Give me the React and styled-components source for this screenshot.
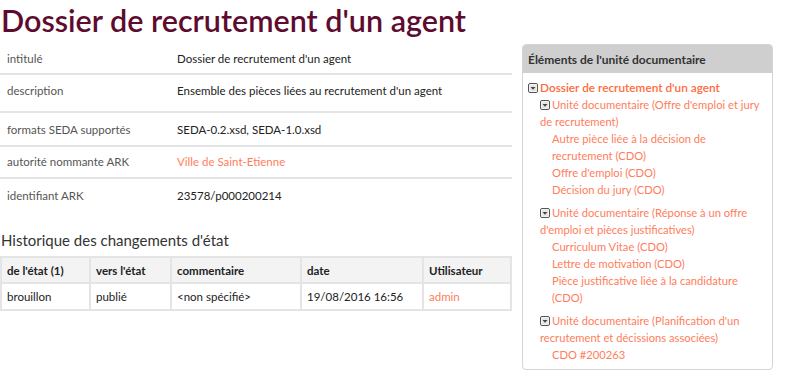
import React from "react";
import styled, { createGlobalStyle } from "styled-components";

const GlobalStyle = createGlobalStyle`
  body {
    margin: 0;
    background: #fff;
    font-family: Lato, "Open Sans", sans-serif;
    color: #222;
  }
`;

const Page = styled.div`
  display: flex;
  align-items: flex-start;
  gap: 10px;
  width: 800px;
  height: 375px;
  overflow: hidden;
`;

const Main = styled.div`
  width: 512px;
  flex: none;
`;

const Title = styled.h1`
  margin: 2px 0 3px 1px;
  font-size: 30.5px;
  font-weight: 600;
  line-height: 36px;
  color: #5e0b30;
  white-space: nowrap;
  width: 800px;
`;

const InfoTable = styled.div`
  display: flex;
  flex-direction: column;
`;

const InfoRow = styled.div`
  display: grid;
  grid-template-columns: 177px 1fr;
  align-items: start;
  min-height: ${(p) => p.$h}px;
  border-bottom: ${(p) => (p.$last ? "none" : "2px solid #e4e4e4")};
  box-sizing: border-box;
  padding-top: ${(p) => p.$pt}px;
  font-size: 11.5px;
`;

const Label = styled.span`
  padding-left: 7px;
  color: #555;
`;

const Value = styled.span`
  color: ${(p) => (p.$link ? "#ff7d5c" : "#222")};
`;

const SubTitle = styled.h2`
  margin: 20px 0 7px 1px;
  font-size: 15px;
  font-weight: normal;
  color: #333;
`;

const History = styled.table`
  width: 512px;
  border-collapse: collapse;
  table-layout: fixed;
  font-size: 11.5px;
`;

const Th = styled.th`
  box-sizing: border-box;
  text-align: left;
  font-weight: bold;
  background: #f3f3f3;
  border: 2px solid #e4e4e4;
  padding: 0 5px;
  height: 26px;
  width: ${(p) => (p.$w ? `${p.$w}px` : "auto")};
  color: #222;
`;

const Td = styled.td`
  border: 2px solid #e4e4e4;
  padding: 0 5px;
  height: 25px;
  color: ${(p) => (p.$link ? "#ff7d5c" : "#222")};
`;

const Panel = styled.div`
  margin-top: 44px;
  width: 251px;
  height: 326px;
  box-sizing: border-box;
  border: 1px solid #d4d4d4;
  border-radius: 4px;
  overflow: hidden;
  flex: none;
`;

const PanelHead = styled.div`
  background: #cfcfcf;
  height: 28px;
  display: flex;
  align-items: center;
  padding-left: 5px;
  font-size: 12px;
  font-weight: bold;
  color: #333;
`;

const Tree = styled.div`
  padding: 6px 6px 6px 5px;
  font-size: 11.2px;
  line-height: 17px;
  color: #ff7d5c;
`;

const Root = styled.div`
  color: #ff6a3d;
  font-weight: 600;
  font-size: 11.8px;
`;

const Group = styled.div`
  margin-top: ${(p) => (p.$first ? 0 : 6)}px;
  padding-left: 12px;
`;

const Leaf = styled.div`
  padding-left: 12px;
`;

const ToggleBox = styled.svg`
  width: 10px;
  height: 10px;
  margin-right: 2px;
  vertical-align: -1px;
`;

const Toggle = () => (
  <ToggleBox viewBox="0 0 10 10">
    <rect x="0.5" y="0.5" width="9" height="9" rx="1.5" fill="#fff" stroke="#555" />
    <rect x="1.5" y="1.5" width="7" height="7" fill="#e6e6e6" />
    <path d="M2.5 4 L7.5 4 L5 6.8 Z" fill="#444" />
  </ToggleBox>
);

const infos = [
  { label: "intitulé", value: "Dossier de recrutement d'un agent", h: 34, pt: 11 },
  { label: "description", value: "Ensemble des pièces liées au recrutement d'un agent", h: 38, pt: 9 },
  { label: "formats SEDA supportés", value: "SEDA-0.2.xsd, SEDA-1.0.xsd", h: 34, pt: 10 },
  { label: "autorité nommante ARK", value: "Ville de Saint-Etienne", h: 32, pt: 8, link: true },
  { label: "identifiant ARK", value: "23578/p000200214", h: 32, pt: 10, last: true },
];

const groups = [
  {
    name: "Unité documentaire (Offre d'emploi et jury de recrutement)",
    items: [
      "Autre pièce liée à la décision de recrutement (CDO)",
      "Offre d'emploi (CDO)",
      "Décision du jury (CDO)",
    ],
  },
  {
    name: "Unité documentaire (Réponse à un offre d'emploi et pièces justificatives)",
    items: [
      "Curriculum Vitae (CDO)",
      "Lettre de motivation (CDO)",
      "Pièce justificative liée à la candidature (CDO)",
    ],
  },
  {
    name: "Unité documentaire (Planification d'un recrutement et décissions associées)",
    items: ["CDO #200263"],
  },
];

export default function App() {
  return (
    <>
      <GlobalStyle />
      <Page>
        <Main>
          <Title>Dossier de recrutement d'un agent</Title>
          <InfoTable>
            {infos.map((row) => (
              <InfoRow key={row.label} $h={row.h} $pt={row.pt} $last={row.last}>
                <Label>{row.label}</Label>
                <Value $link={row.link}>{row.value}</Value>
              </InfoRow>
            ))}
          </InfoTable>
          <SubTitle>Historique des changements d'état</SubTitle>
          <History>
            <thead>
              <tr>
                <Th $w={89}>de l'état (1)</Th>
                <Th $w={81}>vers l'état</Th>
                <Th $w={130}>commentaire</Th>
                <Th $w={122}>date</Th>
                <Th>Utilisateur</Th>
              </tr>
            </thead>
            <tbody>
              <tr>
                <Td>brouillon</Td>
                <Td>publié</Td>
                <Td>&lt;non spécifié&gt;</Td>
                <Td>19/08/2016 16:56</Td>
                <Td $link>admin</Td>
              </tr>
            </tbody>
          </History>
        </Main>
        <Panel>
          <PanelHead>Éléments de l'unité documentaire</PanelHead>
          <Tree>
            <Root>
              <Toggle />
              Dossier de recrutement d'un agent
            </Root>
            {groups.map((g, i) => (
              <Group key={g.name} $first={i === 0}>
                <div>
                  <Toggle />
                  {g.name}
                </div>
                {g.items.map((it) => (
                  <Leaf key={it}>{it}</Leaf>
                ))}
              </Group>
            ))}
          </Tree>
        </Panel>
      </Page>
    </>
  );
}
